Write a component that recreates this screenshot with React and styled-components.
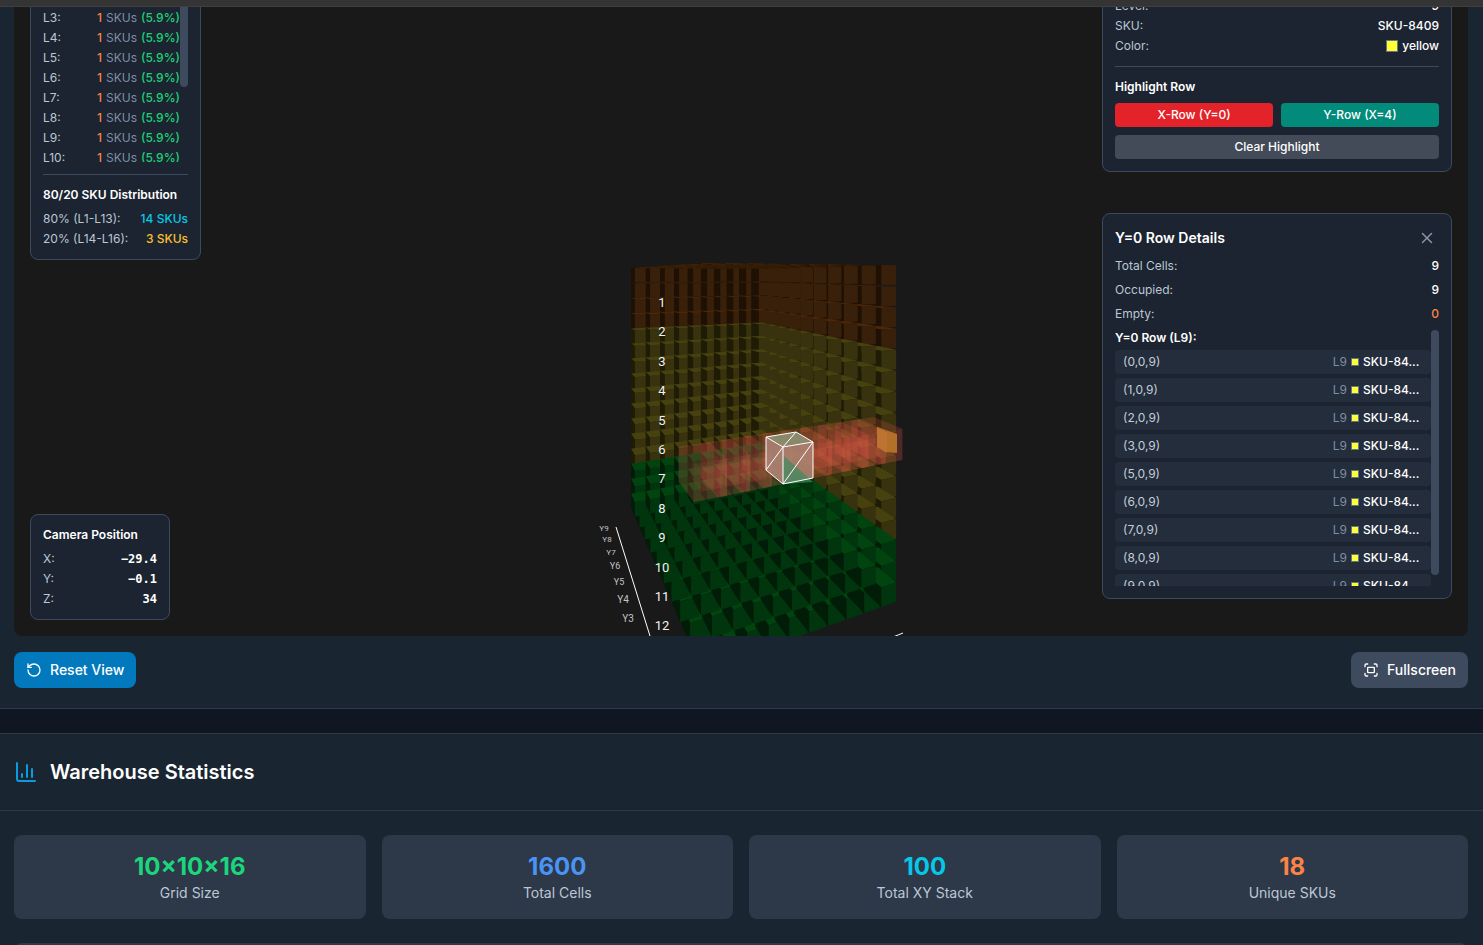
import React from "react";
import styled, { createGlobalStyle } from "styled-components";
import { ChartColumn, Fullscreen, RotateCcw, X } from "lucide-react";

const GlobalStyle = createGlobalStyle`
  * { box-sizing: border-box; }
  html, body { margin: 0; background: #101723; }
  body { font-family: Inter, "Liberation Sans", sans-serif; color: #fff; }
  button { font: inherit; color: inherit; border: 0; margin: 0; cursor: pointer; }
  h2, h3, p, ul, dl, dd, dt { margin: 0; padding: 0; }
`;

const Page = styled.div`
  height: 100vh;
  overflow: hidden;
  display: flex;
  flex-direction: column;
  gap: 24px;
`;
const TopEdge = styled.div`
  flex: none;
  height: 7px;
  background: #343434;
  border-bottom: 1px solid #3f3f3f;
`;
const Viewer = styled.section`
  flex: none;
  margin-top: -24px;
  padding: 0 15px 20px 14px;
  background: #1a2532;
  border-bottom: 1px solid #2d3948;
`;
const Stage = styled.div`
  position: relative;
  display: flex;
  justify-content: space-between;
  height: 629px;
  padding: 0 16px;
  overflow: hidden;
  border-radius: 0 0 8px 8px;
  background: #191919;
`;
const Drawing = styled.svg`
  position: absolute;
  top: 0;
  left: 50%;
  width: 400px;
  height: 629px;
  margin-left: -200px;
`;
const Side = styled.div`
  position: relative;
  display: flex;
  flex-direction: column;
  align-items: stretch;
  width: ${(p) => p.$width};
  margin-top: ${(p) => p.$scroll};
`;
const Panel = styled.section`
  flex: none;
  width: ${(p) => p.$width || "auto"};
  margin-top: ${(p) => p.$push || "0"};
  margin-bottom: ${(p) => p.$below || "0"};
  padding: 12px;
  border: 1px solid #3c4a5e;
  border-radius: 8px;
  background: #1b2430;
  font-size: 12px;
  line-height: 16px;
`;
const Rows = styled.dl`
  display: flex;
  flex-direction: column;
  gap: ${(p) => p.$gap || "4px"};
`;
const LevelScroller = styled.div`
  position: relative;
  height: 172px;
  padding: 20px 8px 0 0;
  overflow: hidden;
`;
const Row = styled.div`
  flex: none;
  display: flex;
  justify-content: space-between;
  align-items: center;
  height: 16px;
`;
const Term = styled.dt`
  color: #bcc7d5;
`;
const Value = styled.dd`
  display: flex;
  align-items: center;
  gap: 4px;
  color: ${(p) => p.$color || "#fff"};
  font-weight: ${(p) => (p.$mono ? 700 : 500)};
  font-family: ${(p) => (p.$mono ? '"DejaVu Sans Mono", monospace' : "inherit")};
`;
const Count = styled.span`
  color: #fb8346;
`;
const Unit = styled.span`
  color: #7f8ea6;
  font-weight: 400;
`;
const Percent = styled.span`
  color: #1dd176;
`;
const Thumb = styled.span`
  position: absolute;
  top: 0;
  right: 0;
  width: 8px;
  height: ${(p) => p.$size};
  border-radius: 4px;
  background: #3e4a5d;
`;
const Divider = styled.hr`
  height: 1px;
  margin: 12px 0;
  border: 0;
  background: #3c4a5e;
`;
const PanelTitle = styled.h3`
  margin-bottom: 8px;
  font-size: 12px;
  line-height: 16px;
  font-weight: 600;
`;
const Swatch = styled.span`
  width: ${(p) => p.$size};
  height: ${(p) => p.$size};
  background: #ffff33;
  border: 1px solid #64748b;
`;
const ButtonGrid = styled.div`
  display: grid;
  grid-template-columns: 1fr 1fr;
  gap: 8px;
`;
const RowButton = styled.button`
  grid-column: ${(p) => (p.$wide ? "1 / -1" : "auto")};
  height: 24px;
  padding: 0;
  border-radius: 4px;
  background: ${(p) => p.$color};
  font-size: 12px;
  line-height: 16px;
  font-weight: 500;
`;
const DetailHead = styled.header`
  display: flex;
  align-items: center;
  justify-content: space-between;
  height: 24px;
  margin-bottom: 8px;
`;
const DetailTitle = styled.h3`
  font-size: 14px;
  line-height: 20px;
  font-weight: 600;
`;
const CloseButton = styled.button`
  display: grid;
  place-items: center;
  width: 24px;
  height: 24px;
  padding: 0;
  background: none;
  color: #8a98ac;
`;
const CellScroller = styled.div`
  position: relative;
  height: 256px;
  margin-top: 8px;
  padding-right: 8px;
  overflow: hidden;
`;
const CellTitle = styled(PanelTitle)`
  margin-bottom: 4px;
`;
const CellList = styled.ul`
  display: flex;
  flex-direction: column;
  gap: 4px;
  list-style: none;
`;
const Cell = styled.li`
  display: flex;
  align-items: center;
  gap: 4px;
  height: 24px;
  padding: 0 8px;
  border-radius: 4px;
  background: #232d3b;
`;
const CellName = styled.span`
  flex: 1;
  color: #c3cdda;
`;
const CellSku = styled.span`
  width: 60px;
  font-weight: 500;
  white-space: nowrap;
`;
const Actions = styled.div`
  display: flex;
  justify-content: space-between;
  padding-top: 16px;
`;
const ActionButton = styled.button`
  display: flex;
  align-items: center;
  gap: 8px;
  height: 36px;
  padding: 0 12px;
  border-radius: 8px;
  background: ${(p) => p.$color};
  font-size: 14px;
  line-height: 20px;
  font-weight: 500;
`;
const Stats = styled.section`
  flex: none;
  border-top: 1px solid #2d3948;
  background: #1a2532;
`;
const StatsHead = styled.header`
  display: flex;
  align-items: center;
  gap: 12px;
  height: 77px;
  padding: 0 14px;
  border-bottom: 1px solid #2d3948;
  color: #0d9be0;
`;
const StatsTitle = styled.h2`
  color: #fff;
  font-size: 20px;
  line-height: 28px;
  font-weight: 600;
`;
const StatsBody = styled.div`
  display: flex;
  flex-direction: column;
  gap: 24px;
  padding: 24px 15px 24px 14px;
`;
const Cards = styled.div`
  display: grid;
  grid-template-columns: repeat(4, 1fr);
  gap: 16px;
`;
const Card = styled.article`
  padding: 16px;
  border-radius: 8px;
  background: #2d3848;
  text-align: center;
`;
const Figure = styled.p`
  color: ${(p) => p.$color};
  font-size: 24px;
  line-height: 32px;
  font-weight: 700;
`;
const Caption = styled.p`
  color: #bcc7d5;
  font-size: 14px;
  line-height: 20px;
`;
const Breakdown = styled.div`
  height: 160px;
  border-radius: 8px;
  background: #2d3848;
`;

/* ---- Rack projection -------------------------------------------------- */
const CENTER = 741;
const HORIZON = 275.6;
const LEFT = [-7.39, 0.0666];
const ALONG = [0.8965, 0.00084];
const ACROSS = [0.5835, -0.00278];
const SHADES = {
  orange: { front: "#39200b", side: "#1e1104", top: "#4e2708" },
  olive: { front: "#38330e", side: "#1f1c06", top: "#46410f" },
  green: { front: "#01350d", side: "#011c07", top: "#01440f" },
};

function project(u, v, h) {
  const x = LEFT[0] + ALONG[0] * u + ACROSS[0] * v;
  const z = LEFT[1] + ALONG[1] * u + ACROSS[1] * v;
  return `${(CENTER + x / z).toFixed(1)},${(HORIZON + (h - 0.53) / z).toFixed(1)}`;
}

function boxFaces(i, j, k, size, height) {
  const a = (1 - size) / 2;
  const b = (1 - height) / 2;
  const u0 = i + a, u1 = i + 1 - a, v0 = j + a, v1 = j + 1 - a;
  const h0 = k + b, h1 = k + 1 - b;
  return {
    top: [project(u0, v0, h0), project(u1, v0, h0), project(u1, v1, h0), project(u0, v1, h0)].join(" "),
    side: [project(u0, v0, h0), project(u0, v1, h0), project(u0, v1, h1), project(u0, v0, h1)].join(" "),
    front: [project(u0, v1, h0), project(u1, v1, h0), project(u1, v1, h1), project(u0, v1, h1)].join(" "),
  };
}

function buildRack() {
  const boxes = [];
  for (let k = 0; k < 16; k++) {
    for (let j = 9; j >= 0; j--) {
      for (let i = 0; i < 10; i++) {
        if (k !== 0 && k < 14 && j > 1 && i < 8) continue;
        const shade = k < 4 ? SHADES.orange : k < 13 ? SHADES.olive : SHADES.green;
        boxes.push({ key: `${i}-${j}-${k}`, shade, depth: i - j, k, faces: boxFaces(i, j, k, 0.9, 0.92) });
      }
    }
  }
  return boxes.sort((p, q) => p.k - q.k || p.depth - q.depth);
}

const RACK = buildRack();
const HIGHLIGHT = Array.from({ length: 10 }, (_, i) => boxFaces(i - 0.2, 9, 7.9, 1.4, 1.45));
const INNER = Array.from({ length: 9 }, (_, i) => boxFaces(i, 9, 8, 0.9, 0.9));
const Y_LABELS = [
  ["Y9", 604, 531, 8], ["Y8", 607, 542, 8], ["Y7", 611, 555, 8], ["Y6", 615, 569, 9],
  ["Y5", 619, 585, 9], ["Y4", 623, 603, 10], ["Y3", 628, 622, 10],
];

function RackDrawing() {
  return (
    <Drawing viewBox="541 7 400 629" role="img" aria-label="Warehouse rack view">
      {RACK.map(({ key, shade, faces }) => (
        <g key={key}>
          {Object.keys(faces).map((f) => (
            <polygon key={f} points={faces[f]} fill={shade[f]} />
          ))}
        </g>
      ))}
      {HIGHLIGHT.map((f, i) => (
        <g key={i} fill="#ff5a55">
          <polygon points={f.top} fillOpacity="0.18" />
          <polygon points={f.side} fillOpacity="0.2" />
          <polygon points={f.front} fillOpacity="0.24" />
        </g>
      ))}
      {INNER.map((f, i) => (
        <g key={i} fill="#ff6458">
          <polygon points={f.side} fillOpacity="0.06" />
          <polygon points={f.front} fillOpacity="0.14" />
        </g>
      ))}
      <polygon points="877,427 887,432 887,453 877,447" fill="#bd7331" />
      <polygon points="877,427 897,434 897,453 887,452 887,432" fill="#b2702b" />
      <polygon points="766,437 796,432 813,442 783,447" fill="#8d9b7c" fillOpacity="0.8" />
      <polygon points="766,437 783,447 783,484 766,470" fill="#b08a7c" fillOpacity="0.8" />
      <polygon points="783,447 813,442 813,478 783,484" fill="#aa8877" fillOpacity="0.8" />
      <polygon points="783,455 813,482 783,484" fill="#3f8a60" fillOpacity="0.7" />
      <path
        d="M766 437L796 432L813 442L783 447ZM766 437V470L783 484V447M783 484L813 478V442M783 447L796 432M766 470L783 447M783 484L813 442"
        fill="none"
        stroke="#fff"
        strokeWidth="1"
      />
      <g fill="#f2f2f2" fontFamily='Roboto, "Liberation Sans", sans-serif' textAnchor="middle">
        {Array.from({ length: 12 }, (_, i) => (
          <text key={i} x="662" y={307 + Math.round(i * 29.4)} fontSize="13">{i + 1}</text>
        ))}
      </g>
      <g fill="#c4c4c4" fontFamily='Roboto, "Liberation Sans", sans-serif' textAnchor="middle">
        {Y_LABELS.map(([t, x, y, s]) => (
          <text key={t} x={x} y={y} fontSize={s}>{t}</text>
        ))}
      </g>
      <path d="M616 527L650 636M893 637L903 633" stroke="#fff" fill="none" />
    </Drawing>
  );
}

const LEVELS = ["L3:", "L4:", "L5:", "L6:", "L7:", "L8:", "L9:", "L10:"];
const CELLS = [0, 1, 2, 3, 5, 6, 7, 8, 9];
const CARDS = [
  ["10×10×16", "Grid Size", "#1bd67c"],
  ["1600", "Total Cells", "#4a94f5"],
  ["100", "Total XY Stack", "#06c8e8"],
  ["18", "Unique SKUs", "#fb8346"],
];

function Entry({ label, color, mono, children }) {
  return (
    <Row>
      <Term>{label}</Term>
      <Value $color={color} $mono={mono}>{children}</Value>
    </Row>
  );
}

export default function App() {
  return (
    <>
      <GlobalStyle />
      <Page>
        <TopEdge />
        <Viewer>
          <Stage>
            <RackDrawing />
            <Side $width="171px" $scroll="-30px">
              <Panel>
                <LevelScroller>
                  <Rows>
                    {LEVELS.map((l) => (
                      <Entry key={l} label={l}>
                        <Count>1</Count>
                        <Unit>SKUs</Unit>
                        <Percent>(5.9%)</Percent>
                      </Entry>
                    ))}
                  </Rows>
                  <Thumb $size="97px" />
                </LevelScroller>
                <Divider />
                <PanelTitle>80/20 SKU Distribution</PanelTitle>
                <Rows>
                  <Entry label="80% (L1-L13):" color="#06c8e8">14 SKUs</Entry>
                  <Entry label="20% (L14-L16):" color="#fcc02e">3 SKUs</Entry>
                </Rows>
              </Panel>
              <Panel $width="140px" $push="auto" $below="16px">
                <PanelTitle>Camera Position</PanelTitle>
                <Rows>
                  <Entry label="X:" mono>−29.4</Entry>
                  <Entry label="Y:" mono>−0.1</Entry>
                  <Entry label="Z:" mono>34</Entry>
                </Rows>
              </Panel>
            </Side>
            <Side $width="350px" $scroll="-22px">
              <Panel>
                <Rows>
                  <Entry label="Level:">9</Entry>
                  <Entry label="SKU:">SKU-8409</Entry>
                  <Entry label="Color:"><Swatch $size="12px" />yellow</Entry>
                </Rows>
                <Divider />
                <PanelTitle>Highlight Row</PanelTitle>
                <ButtonGrid>
                  <RowButton $color="#e32329">X-Row (Y=0)</RowButton>
                  <RowButton $color="#028a7b">Y-Row (X=4)</RowButton>
                  <RowButton $wide $color="#424b57">Clear Highlight</RowButton>
                </ButtonGrid>
              </Panel>
              <Panel $push="41px">
                <DetailHead>
                  <DetailTitle>Y=0 Row Details</DetailTitle>
                  <CloseButton aria-label="Close"><X size={18} strokeWidth={2} /></CloseButton>
                </DetailHead>
                <Rows $gap="8px">
                  <Entry label="Total Cells:">9</Entry>
                  <Entry label="Occupied:">9</Entry>
                  <Entry label="Empty:" color="#fb8346">0</Entry>
                </Rows>
                <CellScroller>
                  <CellTitle>Y=0 Row (L9):</CellTitle>
                  <CellList>
                    {CELLS.map((c) => (
                      <Cell key={c}>
                        <CellName>({c},0,9)</CellName>
                        <Unit>L9</Unit>
                        <Swatch $size="8px" />
                        <CellSku>SKU-84...</CellSku>
                      </Cell>
                    ))}
                  </CellList>
                  <Thumb $size="245px" />
                </CellScroller>
              </Panel>
            </Side>
          </Stage>
          <Actions>
            <ActionButton $color="#0279bd"><RotateCcw size={16} />Reset View</ActionButton>
            <ActionButton $color="#3e4a5d"><Fullscreen size={16} />Fullscreen</ActionButton>
          </Actions>
        </Viewer>
        <Stats>
          <StatsHead>
            <ChartColumn size={24} />
            <StatsTitle>Warehouse Statistics</StatsTitle>
          </StatsHead>
          <StatsBody>
            <Cards>
              {CARDS.map(([value, label, color]) => (
                <Card key={label}>
                  <Figure $color={color}>{value}</Figure>
                  <Caption>{label}</Caption>
                </Card>
              ))}
            </Cards>
            <Breakdown />
          </StatsBody>
        </Stats>
      </Page>
    </>
  );
}
